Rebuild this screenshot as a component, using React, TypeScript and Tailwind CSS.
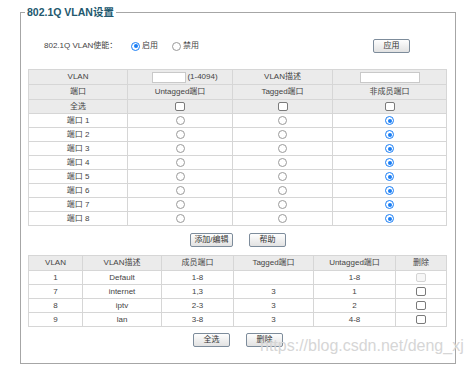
import React from "react";

function Radio({ checked }: { checked?: boolean }) {
  if (checked) {
    return (
      <span className="inline-block h-[9px] w-[9px] rounded-full border border-[#1a7ef5] bg-white p-[1.5px]">
        <span className="block h-full w-full rounded-full bg-[#1a7ef5]" />
      </span>
    );
  }
  return <span className="inline-block h-[9px] w-[9px] rounded-full border border-[#9a9a9a] bg-white" />;
}

function Check({ disabled }: { disabled?: boolean }) {
  return disabled ? (
    <span className="inline-block h-[9px] w-[10px] rounded-[2px] border border-[#d4d4d4] bg-[#f7f7f7]" />
  ) : (
    <span className="inline-block h-[9px] w-[10px] rounded-[2px] border border-[#7a7a7a] bg-white" />
  );
}

function Btn({ children, w }: { children: React.ReactNode; w: string }) {
  return (
    <span
      className={`${w} inline-flex h-[14px] items-center justify-center rounded-[2px] border border-[#7d8c9b] bg-linear-to-b from-[#fefefe] to-[#e2e2e2] text-[8px] leading-none text-[#333]`}
    >
      {children}
    </span>
  );
}

const t1Cols = "grid grid-cols-[99px_105px_100px_114px]";
const t2Cols = "grid grid-cols-[54px_79px_72px_80px_82px_51px]";
const cell = "flex items-center justify-center border-r border-b border-[#d6d6d6] text-[8px] leading-none";

export default function App() {
  const ports = [1, 2, 3, 4, 5, 6, 7, 8];
  const rows = [
    ["1", "Default", "1-8", "", "1-8", true],
    ["7", "internet", "1,3", "3", "1", false],
    ["8", "iptv", "2-3", "3", "2", false],
    ["9", "lan", "3-8", "3", "4-8", false],
  ] as const;
  return (
    <div className="relative h-[371px] w-[469px] overflow-hidden bg-white font-['Liberation_Sans','Noto_Sans_CJK_SC',sans-serif] text-[#444]">
      <div className="pl-[20px] pt-[12px]">
        <div className="relative h-[352px] w-[436px] border border-[#a6a6a6]">
          <span className="absolute left-[4px] top-[-8px] bg-white px-[2px] text-[10.5px] font-bold leading-[14px] text-[#22586e]">
            802.1Q VLAN设置
          </span>
          <div className="px-[7px] pt-[25px]">
            <div className="flex h-[16px] items-center text-[8px] leading-none">
              <span className="ml-[16px] w-[87px]">802.1Q VLAN使能：</span>
              <span className="flex w-[41px] items-center gap-[2px]">
                <Radio checked />
                <span>启用</span>
              </span>
              <span className="flex items-center gap-[2px]">
                <Radio />
                <span>禁用</span>
              </span>
              <span className="ml-auto mr-[38px]">
                <Btn w="w-[37px]">应用</Btn>
              </span>
            </div>

            <div className={`${t1Cols} mt-[15px] w-[419px] border-l border-t border-[#d6d6d6]`}>
              <div className={`${cell} h-[15px] bg-[#ebebeb]`}>VLAN</div>
              <div className={`${cell} h-[15px] bg-[#ebebeb]`}>
                <span className="ml-[10px] h-[11px] w-[34px] border border-[#c9c9c9] bg-white" />
                <span className="ml-[1px]">(1-4094)</span>
              </div>
              <div className={`${cell} h-[15px] bg-[#ebebeb]`}>VLAN描述</div>
              <div className={`${cell} h-[15px] bg-[#ebebeb]`}>
                <span className="h-[11px] w-[60px] border border-[#c9c9c9] bg-white" />
              </div>

              <div className={`${cell} h-[15px] bg-[#ebebeb]`}>端口</div>
              <div className={`${cell} h-[15px] bg-[#ebebeb]`}>Untagged端口</div>
              <div className={`${cell} h-[15px] bg-[#ebebeb]`}>Tagged端口</div>
              <div className={`${cell} h-[15px] bg-[#ebebeb]`}>非成员端口</div>

              <div className={`${cell} h-[14px] bg-[#ebebeb]`}>全选</div>
              <div className={`${cell} h-[14px] bg-[#ebebeb]`}><Check /></div>
              <div className={`${cell} h-[14px] bg-[#ebebeb]`}><Check /></div>
              <div className={`${cell} h-[14px] bg-[#ebebeb]`}><Check /></div>

              {ports.map((p) => (
                <React.Fragment key={p}>
                  <div className={`${cell} h-[14px]`}>端口 {p}</div>
                  <div className={`${cell} h-[14px]`}><Radio /></div>
                  <div className={`${cell} h-[14px]`}><Radio /></div>
                  <div className={`${cell} h-[14px]`}><Radio checked /></div>
                </React.Fragment>
              ))}
            </div>

            <div className="mt-[7px] flex w-[419px] justify-center gap-[16px] pl-[1px]">
              <Btn w="w-[43px]">添加/编辑</Btn>
              <Btn w="w-[37px]">帮助</Btn>
            </div>

            <div className={`${t2Cols} mt-[8px] w-[419px] border-l border-t border-[#d6d6d6]`}>
              {["VLAN", "VLAN描述", "成员端口", "Tagged端口", "Untagged端口", "删除"].map((h) => (
                <div key={h} className={`${cell} h-[15px] bg-[#ebebeb]`}>{h}</div>
              ))}
              {rows.map((r) => (
                <React.Fragment key={r[0]}>
                  <div className={`${cell} h-[14px]`}>{r[0]}</div>
                  <div className={`${cell} h-[14px]`}>{r[1]}</div>
                  <div className={`${cell} h-[14px]`}>{r[2]}</div>
                  <div className={`${cell} h-[14px]`}>{r[3]}</div>
                  <div className={`${cell} h-[14px]`}>{r[4]}</div>
                  <div className={`${cell} h-[14px]`}><Check disabled={r[5]} /></div>
                </React.Fragment>
              ))}
            </div>

            <div className="mt-[6px] flex w-[419px] justify-center gap-[16px] pl-[1px]">
              <Btn w="w-[37px]">全选</Btn>
              <Btn w="w-[37px]">删除</Btn>
            </div>
          </div>
        </div>
      </div>
      <span className="absolute left-[260px] top-[337px] text-[16px] leading-[18px] text-[#d6d6d6]">
        https://blog.csdn.net/deng_xj
      </span>
    </div>
  );
}
